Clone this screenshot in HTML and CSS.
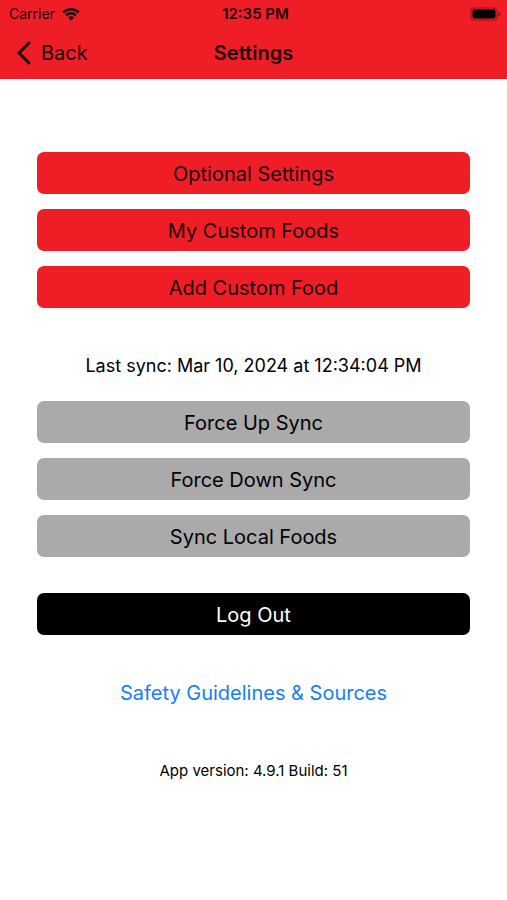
FILE: index.html
```html
<!DOCTYPE html>
<html lang="en">
<head>
<meta charset="utf-8">
<meta name="viewport" content="width=device-width, initial-scale=1">
<title>Settings</title>
<link rel="stylesheet" href="styles.css">
</head>
<body>
<header class="top">
  <div class="status">
    <div class="carrier">
      <span>Carrier</span>
      <svg class="wifi" viewBox="0 0 20 15" aria-hidden="true">
        <path d="M1.6 5.8a12 12 0 0 1 16.8 0M4.6 8.9a7.7 7.7 0 0 1 10.8 0" fill="none" stroke="currentColor" stroke-width="2.6"/>
        <path d="M10 14.5l-3.3-3.3a4.7 4.7 0 0 1 6.6 0z" fill="currentColor"/>
      </svg>
    </div>
    <span class="time">12:35 PM</span>
    <svg class="battery" viewBox="0 0 32 14" aria-hidden="true">
      <rect x="1" y="1" width="26" height="12" rx="3.5" fill="none" stroke="currentColor" stroke-opacity=".45"/>
      <rect x="2.500" y="2.500" width="23" height="9" rx="2" fill="#000"/>
      <path d="M28.500 5v4q1.800-.6 1.800-2t-1.800-2z" fill="currentColor" fill-opacity=".5"/>
    </svg>
  </div>
  <nav class="bar">
    <a class="back" href="#">
      <svg class="chevron" viewBox="0 0 16 26" aria-hidden="true"><path d="M13 3L3 13l10 10" fill="none" stroke="currentColor" stroke-width="3" stroke-linecap="round" stroke-linejoin="miter"/></svg>
      <span>Back</span>
    </a>
    <h1 class="title">Settings</h1>
  </nav>
</header>
<main class="content">
  <div class="group">
    <button class="btn red" type="button">Optional Settings</button>
    <button class="btn red" type="button">My Custom Foods</button>
    <button class="btn red" type="button">Add Custom Food</button>
  </div>
  <p class="sync">Last sync: Mar 10, 2024 at 12:34:04 PM</p>
  <div class="group">
    <button class="btn gray" type="button">Force Up Sync</button>
    <button class="btn gray" type="button">Force Down Sync</button>
    <button class="btn gray" type="button">Sync Local Foods</button>
  </div>
  <button class="btn black" type="button">Log Out</button>
  <a class="link" href="#">Safety Guidelines &amp; Sources</a>
  <p class="version">App version: 4.9.1 Build: 51</p>
</main>
</body>
</html>
```
FILE: styles.css
```css
* { box-sizing: border-box; }
body {
  margin: 0;
  background: #fff;
  color: #000;
  font-family: Inter, "Liberation Sans", sans-serif;
}
.top { background: #ef1d26; color: #1c0508; padding-bottom: 1px; }
.status {
  display: grid;
  grid-template-columns: 1fr auto 1fr;
  align-items: center;
  height: 27px;
  padding: 0 5px 0 9px;
  font-size: 14px;
}
.carrier { display: flex; align-items: center; gap: 6px; }
.wifi { width: 20px; height: 14px; }
.time { font-size: 15px; font-weight: 600; }
.battery { width: 32px; height: 14px; justify-self: end; }
.bar {
  display: grid;
  grid-template-columns: 1fr auto 1fr;
  align-items: center;
  height: 51px;
  padding: 0 16px;
}
.back {
  display: flex;
  align-items: center;
  gap: 9px;
  color: inherit;
  font-size: 20px;
  text-decoration: none;
}
.chevron { width: 16px; height: 26px; }
.title { margin: 0; font-size: 20px; font-weight: 600; }
.content {
  display: flex;
  flex-direction: column;
  padding: 73px 37px 24px;
}
.group { display: flex; flex-direction: column; gap: 15px; }
.btn {
  width: 100%;
  height: 42px;
  padding: 1px 0 0;
  border: 0;
  border-radius: 7px;
  font-family: inherit;
  font-size: 20px;
  line-height: 24px;
}
.red { background: #ef1d26; color: #1c0508; }
.gray { background: #aaa; color: #000; }
.black { margin-top: 36px; background: #000; color: #fff; }
.sync { margin: 46px 0 23px; font-size: 18px; line-height: 24px; text-align: center; }
.link {
  align-self: center;
  margin-top: 46px;
  color: #147efb;
  font-size: 20px;
  line-height: 24px;
  text-decoration: none;
}
.version { margin: 56px 0 0; font-size: 15px; line-height: 20px; text-align: center; }
```
